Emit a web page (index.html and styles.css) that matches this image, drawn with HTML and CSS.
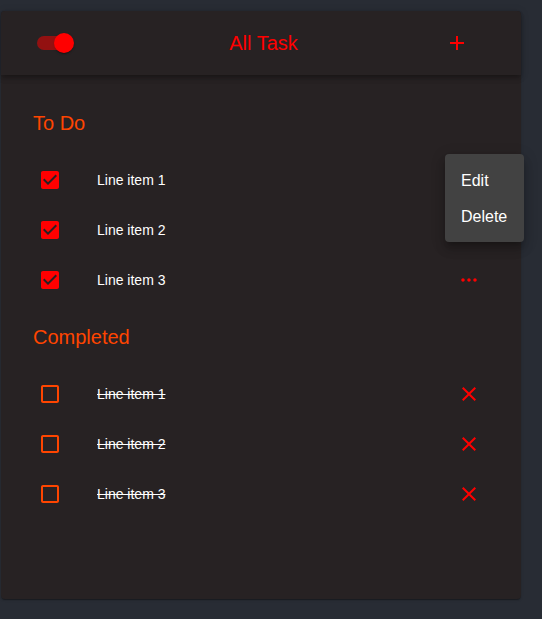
FILE: index.html
```html
<!DOCTYPE html>
<html lang="en">
<head>
<meta charset="utf-8">
<title>All Task</title>
<link rel="stylesheet" href="styles.css">
</head>
<body>
<div class="card">
  <header class="bar">
    <div class="switch"><span class="track"></span><span class="thumb"></span></div>
    <h1 class="title">All Task</h1>
    <button class="add" aria-label="Add">
      <svg viewBox="0 0 24 24" width="24" height="24"><path fill="#ff0000" d="M19 13h-6v6h-2v-6H5v-2h6V5h2v6h6v2z"/></svg>
    </button>
  </header>
  <main class="content">
    <section class="section">
      <h2 class="heading">To Do</h2>
      <ul class="list">
        <li class="row">
          <svg class="box" viewBox="0 0 24 24" width="24" height="24"><path fill="#ff0000" d="M19 3H5c-1.11 0-2 .9-2 2v14c0 1.1.89 2 2 2h14c1.11 0 2-.9 2-2V5c0-1.1-.89-2-2-2zm-9 14l-5-5 1.41-1.41L10 14.17l7.59-7.59L19 8l-9 9z"/></svg>
          <span class="label">Line item 1</span>
          <span class="action"></span>
        </li>
        <li class="row">
          <svg class="box" viewBox="0 0 24 24" width="24" height="24"><path fill="#ff0000" d="M19 3H5c-1.11 0-2 .9-2 2v14c0 1.1.89 2 2 2h14c1.11 0 2-.9 2-2V5c0-1.1-.89-2-2-2zm-9 14l-5-5 1.41-1.41L10 14.17l7.59-7.59L19 8l-9 9z"/></svg>
          <span class="label">Line item 2</span>
          <span class="action"></span>
        </li>
        <li class="row">
          <svg class="box" viewBox="0 0 24 24" width="24" height="24"><path fill="#ff0000" d="M19 3H5c-1.11 0-2 .9-2 2v14c0 1.1.89 2 2 2h14c1.11 0 2-.9 2-2V5c0-1.1-.89-2-2-2zm-9 14l-5-5 1.41-1.41L10 14.17l7.59-7.59L19 8l-9 9z"/></svg>
          <span class="label">Line item 3</span>
          <svg class="action" viewBox="0 0 24 24" width="24" height="24"><path fill="#ff0000" d="M6 10.3c-.95 0-1.7.75-1.7 1.7s.75 1.7 1.7 1.7 1.7-.75 1.7-1.7-.75-1.7-1.7-1.7zm12 0c-.95 0-1.7.75-1.7 1.7s.75 1.7 1.7 1.7 1.7-.75 1.7-1.7-.75-1.7-1.7-1.7zm-6 0c-.95 0-1.7.75-1.7 1.7s.75 1.7 1.7 1.7 1.7-.75 1.7-1.7-.75-1.7-1.7-1.7z"/></svg>
        </li>
      </ul>
    </section>
    <section class="section">
      <h2 class="heading">Completed</h2>
      <ul class="list">
        <li class="row done">
          <svg class="box" viewBox="0 0 24 24" width="24" height="24"><path fill="#ff4500" d="M19 5v14H5V5h14m0-2H5c-1.1 0-2 .9-2 2v14c0 1.1.9 2 2 2h14c1.1 0 2-.9 2-2V5c0-1.1-.9-2-2-2z"/></svg>
          <span class="label">Line item 1</span>
          <svg class="action" viewBox="0 0 24 24" width="24" height="24"><path fill="#ff0000" d="M19 6.41L17.59 5 12 10.59 6.41 5 5 6.41 10.59 12 5 17.59 6.41 19 12 13.41 17.59 19 19 17.59 13.41 12z"/></svg>
        </li>
        <li class="row done">
          <svg class="box" viewBox="0 0 24 24" width="24" height="24"><path fill="#ff4500" d="M19 5v14H5V5h14m0-2H5c-1.1 0-2 .9-2 2v14c0 1.1.9 2 2 2h14c1.1 0 2-.9 2-2V5c0-1.1-.9-2-2-2z"/></svg>
          <span class="label">Line item 2</span>
          <svg class="action" viewBox="0 0 24 24" width="24" height="24"><path fill="#ff0000" d="M19 6.41L17.59 5 12 10.59 6.41 5 5 6.41 10.59 12 5 17.59 6.41 19 12 13.41 17.59 19 19 17.59 13.41 12z"/></svg>
        </li>
        <li class="row done">
          <svg class="box" viewBox="0 0 24 24" width="24" height="24"><path fill="#ff4500" d="M19 5v14H5V5h14m0-2H5c-1.1 0-2 .9-2 2v14c0 1.1.9 2 2 2h14c1.1 0 2-.9 2-2V5c0-1.1-.9-2-2-2z"/></svg>
          <span class="label">Line item 3</span>
          <svg class="action" viewBox="0 0 24 24" width="24" height="24"><path fill="#ff0000" d="M19 6.41L17.59 5 12 10.59 6.41 5 5 6.41 10.59 12 5 17.59 6.41 19 12 13.41 17.59 19 19 17.59 13.41 12z"/></svg>
        </li>
      </ul>
    </section>
  </main>
  <ul class="menu">
    <li class="menu-item">Edit</li>
    <li class="menu-item">Delete</li>
  </ul>
</div>
</body>
</html>
```
FILE: styles.css
```css
* { box-sizing: border-box; }
html, body { margin: 0; padding: 0; }
body {
  background: #282c34;
  font-family: "Liberation Sans", Arial, sans-serif;
  width: 542px;
  height: 619px;
  overflow: hidden;
}
.card {
  position: relative;
  margin: 11px 0 0 1px;
  width: 520px;
  height: 588px;
  background: #272223;
  border-radius: 4px;
  box-shadow: 0 2px 1px -1px rgba(0,0,0,.2), 0 1px 1px 0 rgba(0,0,0,.14), 0 1px 3px 0 rgba(0,0,0,.12);
  display: flex;
  flex-direction: column;
}
.bar {
  height: 64px;
  flex: none;
  display: flex;
  align-items: center;
  padding: 0 40px 0 24px;
  background: #272223;
  border-radius: 4px 4px 0 0;
  box-shadow: 0 2px 4px -1px rgba(0,0,0,.2), 0 4px 5px 0 rgba(0,0,0,.14), 0 1px 10px 0 rgba(0,0,0,.12);
  position: relative;
  z-index: 1;
}
.switch {
  width: 58px;
  height: 38px;
  display: flex;
  align-items: center;
  padding: 0 9px 0 12px;
}
.track {
  width: 34px;
  height: 14px;
  border-radius: 7px;
  background: #ff0000;
  opacity: .5;
  flex: none;
}
.thumb {
  width: 20px;
  height: 20px;
  border-radius: 50%;
  background: #ff0000;
  margin-left: -17px;
  flex: none;
  box-shadow: 0 2px 1px -1px rgba(0,0,0,.2), 0 1px 1px 0 rgba(0,0,0,.14), 0 1px 3px 0 rgba(0,0,0,.12);
}
.title {
  flex: 1;
  margin: 0;
  padding-left: 11px;
  text-align: center;
  font-size: 20px;
  font-weight: 400;
  color: #ff0000;
  line-height: 24px;
}
.add {
  width: 48px;
  height: 48px;
  padding: 12px;
  border: 0;
  background: none;
  display: flex;
}
.content {
  flex: 1;
  padding: 36px 40px 0 32px;
}
.section + .section { margin-top: 20px; }
.heading {
  margin: 0 0 20px;
  font-size: 20px;
  font-weight: 400;
  line-height: 24px;
  color: #ff4500;
}
.list {
  list-style: none;
  margin: 0;
  padding: 0;
}
.row {
  height: 50px;
  display: grid;
  grid-template-columns: 24px 1fr 24px;
  column-gap: 35px;
  align-items: center;
  padding-left: 5px;
}
.box, .action { display: block; }
.label {
  font-size: 14px;
  color: #ffffff;
}
.done .label { text-decoration: line-through; }
.menu {
  position: absolute;
  left: 444px;
  top: 143px;
  width: 79px;
  margin: 0;
  padding: 9px 0 7px;
  list-style: none;
  background: #424242;
  border-radius: 4px;
  z-index: 2;
  box-shadow: 0 5px 5px -3px rgba(0,0,0,.2), 0 8px 10px 1px rgba(0,0,0,.14), 0 3px 14px 2px rgba(0,0,0,.12);
}
.menu-item {
  height: 36px;
  padding: 0 16px;
  font-size: 16px;
  line-height: 36px;
  color: #ffffff;
}
```
